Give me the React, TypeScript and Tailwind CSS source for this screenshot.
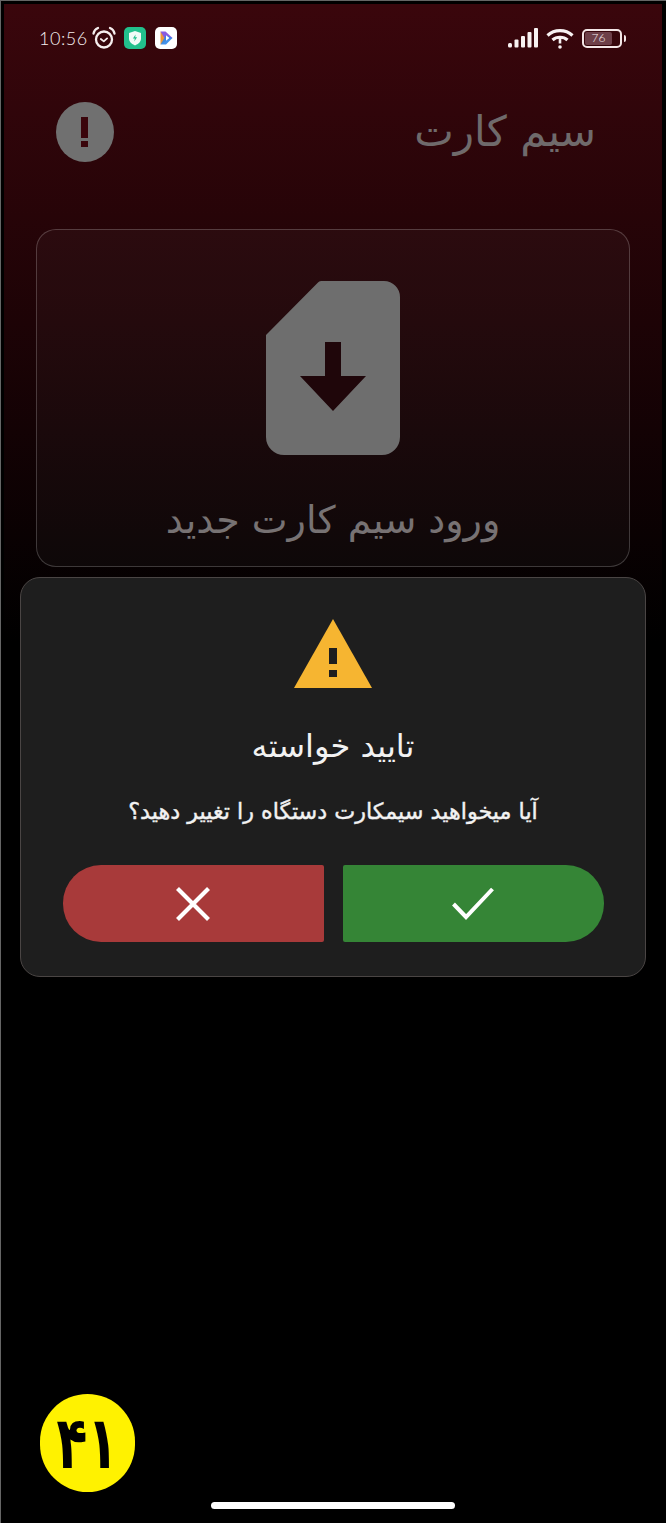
const fa = { fontFamily: '"DejaVu Sans", sans-serif' };

function Alarm() {
  return (
    <svg width="24" height="24" viewBox="0 0 24 24" fill="none" stroke="#f5eeee" strokeWidth="2.300" strokeLinecap="round" strokeLinejoin="round">
      <circle cx="12" cy="13.500" r="8" />
      <path d="M8.800 13l3 2.400 3.300-3" strokeWidth="1.800" />
      <path d="M1.500 7.500C2 4.800 3.600 3 6 2" />
      <path d="M22.500 7.500C22 4.800 20.400 3 18 2" />
    </svg>
  );
}

function ShieldApp() {
  return (
    <svg width="22" height="22" viewBox="0 0 22 22">
      <rect width="22" height="22" rx="5" fill="#22c08c" />
      <path d="M11 4l6 2v5.500c0 3.500-2.700 5.500-6 6.900-3.300-1.400-6-3.400-6-6.900V6z" fill="#f1fbf7" />
      <path d="M11.600 7.500L8.900 11.500h1.900l-.5 3 2.800-4.200h-1.900z" fill="#22c08c" />
    </svg>
  );
}

function PlayApp() {
  return (
    <svg width="22" height="22" viewBox="0 0 22 22">
      <rect width="22" height="22" rx="5" fill="#ffffff" />
      <path d="M5.500 4.500L11 8.200v5.600L5.500 17.500z" fill="#f0983a" />
      <path d="M5.500 4.500h5l7 6.500-6.500 2.800z" fill="#8a5be0" />
      <path d="M11 8.200l6.500 2.800-6.500 6.500H5.500z" fill="#2f86e8" opacity="0.9" />
      <path d="M11 8.200l3.400 2.800L11 13.800z" fill="#ffffff" />
    </svg>
  );
}

function Signal() {
  return (
    <svg width="30" height="20" viewBox="0 0 30 20" fill="#f8f2f2">
      <rect x="0" y="15" width="4" height="4.500" rx="1.500" />
      <rect x="6.500" y="11.500" width="4" height="8" rx="1" />
      <rect x="13" y="8" width="4" height="11.500" rx="1" />
      <rect x="19.500" y="4" width="4" height="15.500" rx="1" />
      <rect x="26" y="0" width="4" height="19.500" rx="1" />
    </svg>
  );
}

function Wifi() {
  return (
    <svg width="28" height="21" viewBox="0 0 28 21" fill="none" stroke="#f8f2f2" strokeWidth="3.200">
      <path d="M1.500 7.500C8.500 1 19.500 1 26.500 7.500" />
      <path d="M6.500 12C10.500 8.300 17.500 8.300 21.500 12" />
      <path d="M14 9.500v6" strokeWidth="2.600" />
      <circle cx="14" cy="19" r="1.800" fill="#f8f2f2" stroke="none" />
    </svg>
  );
}

function Battery() {
  return (
    <div className="flex items-center gap-[2px]">
      <div className="h-[19px] w-[40px] rounded-[5px] border-2 border-[#f3e6e6] p-[1px]">
        <div className="flex h-full w-[27px] items-center justify-center rounded-[2px] bg-[#6d3f48] text-[12px] leading-none font-light text-[#f6ecec]" style={{ fontFamily: '"Lato", sans-serif' }}>
          76
        </div>
      </div>
      <div className="h-[7px] w-[2px] rounded-r-sm bg-[#f3e6e6]" />
    </div>
  );
}

function Sim() {
  return (
    <svg width="134" height="174" viewBox="0 0 134 174">
      <path d="M52 1.500Q53 0 55 0H118a16 16 0 0 1 16 16V156a18 18 0 0 1-18 18H18a18 18 0 0 1-18-18V54Z" fill="#6e6e6e" />
      <path d="M59 61H75V95H100L67 130 34 95H59Z" fill="#1f060a" />
    </svg>
  );
}

export default function App() {
  return (
    <div className="h-[1532px] w-[668px] bg-white">
      <div className="relative h-[1523px] w-[666px] border-t border-l border-[#666] bg-black pt-[3px] pr-[3px] pl-[3px]">
        <div className="flex h-full w-[658px] flex-col bg-linear-to-b/srgb from-[#3a060c] to-black to-[42%]">
          <div className="mt-[23px] flex h-[22px] items-center justify-between pr-[36px] pl-[35px]">
            <div className="flex items-center">
              <span className="w-[53px] text-[18px] leading-none font-light tracking-[0.5px] text-[#f5eeee]" style={{ fontFamily: '"Lato", sans-serif' }}>
                10:56
              </span>
              <Alarm />
              <span className="ml-[8px]">
                <ShieldApp />
              </span>
              <span className="ml-[9px]">
                <PlayApp />
              </span>
            </div>
            <div className="flex items-center gap-[8px]">
              <Signal />
              <Wifi />
              <Battery />
            </div>
          </div>

          <div className="mt-[53px] flex h-[60px] items-center justify-between pr-[66px] pl-[52px]">
            <svg width="58" height="60" viewBox="0 0 58 60">
              <ellipse cx="29" cy="30" rx="29" ry="30" fill="#707070" />
              <rect x="25" y="15" width="7" height="21" fill="#3a050b" />
              <rect x="25" y="39" width="7" height="6" fill="#3a050b" />
            </svg>
            <h1 dir="rtl" className="text-[42px] leading-[60px] font-normal text-[#6f6a6b]" style={fa}>
              سیم کارت
            </h1>
          </div>

          <div className="mt-[67px] ml-[32px] flex h-[338px] w-[594px] flex-col items-center rounded-[20px] border border-white/20 bg-white/[0.03] pt-[51px]">
            <Sim />
            <p dir="rtl" className="mt-[43px] text-[38px] leading-[44px] text-[#777273]" style={fa}>
              ورود سیم کارت جدید
            </p>
          </div>

          <div className="mt-[10px] ml-[16px] flex h-[400px] w-[626px] flex-col items-center rounded-[20px] border border-[#4a4544] bg-[#1e1e1e] pt-[41px]">
            <svg width="78" height="69" viewBox="0 0 78 69">
              <path d="M39 0L78 69H0Z" fill="#f6b531" />
              <rect x="35" y="29" width="8" height="16" fill="#1e1e1e" />
              <rect x="35" y="51" width="8" height="7" fill="#1e1e1e" />
            </svg>
            <h2 dir="rtl" className="mt-[38px] text-[32px] leading-[40px] font-normal text-[#f2f2f2]" style={fa}>
              تایید خواسته
            </h2>
            <p dir="rtl" className="mt-[29px] text-[22.300px] leading-[32px] font-normal text-[#f2f2f2] [-webkit-text-stroke:0.4px_#f2f2f2]" style={fa}>
              آیا میخواهید سیمکارت دستگاه را تغییر دهید؟
            </p>
            <div className="mt-[38px] flex gap-[19px]">
              <button className="flex h-[77px] w-[261px] items-center justify-center rounded-l-[38px] rounded-r-[2px] bg-[#a83a3a]">
                <svg width="34" height="34" viewBox="0 0 34 34" stroke="#ffffff" strokeWidth="4.200">
                  <path d="M1.500 1.500L32.500 32.500M32.500 1.500L1.500 32.500" />
                </svg>
              </button>
              <button className="flex h-[77px] w-[261px] items-center justify-center rounded-l-[2px] rounded-r-[38px] bg-[#358536]">
                <svg width="42" height="33" viewBox="0 0 42 33" fill="none" stroke="#ffffff" strokeWidth="4">
                  <path d="M1.500 17L14 30 40.500 2" />
                </svg>
              </button>
            </div>
          </div>

          <div className="flex-1" />
          <div className="mb-[14px] ml-[207px] h-[7px] w-[244px] rounded-full bg-white" />
        </div>

        <div dir="rtl" className="absolute top-[1393px] left-[39px] flex h-[98px] w-[95px] items-center justify-center rounded-full bg-[#fff200] text-[56px] leading-none font-bold text-black" style={fa}>
          <span className="inline-block scale-x-[0.9] scale-y-[1.3]">۴۱</span>
        </div>
      </div>
    </div>
  );
}
